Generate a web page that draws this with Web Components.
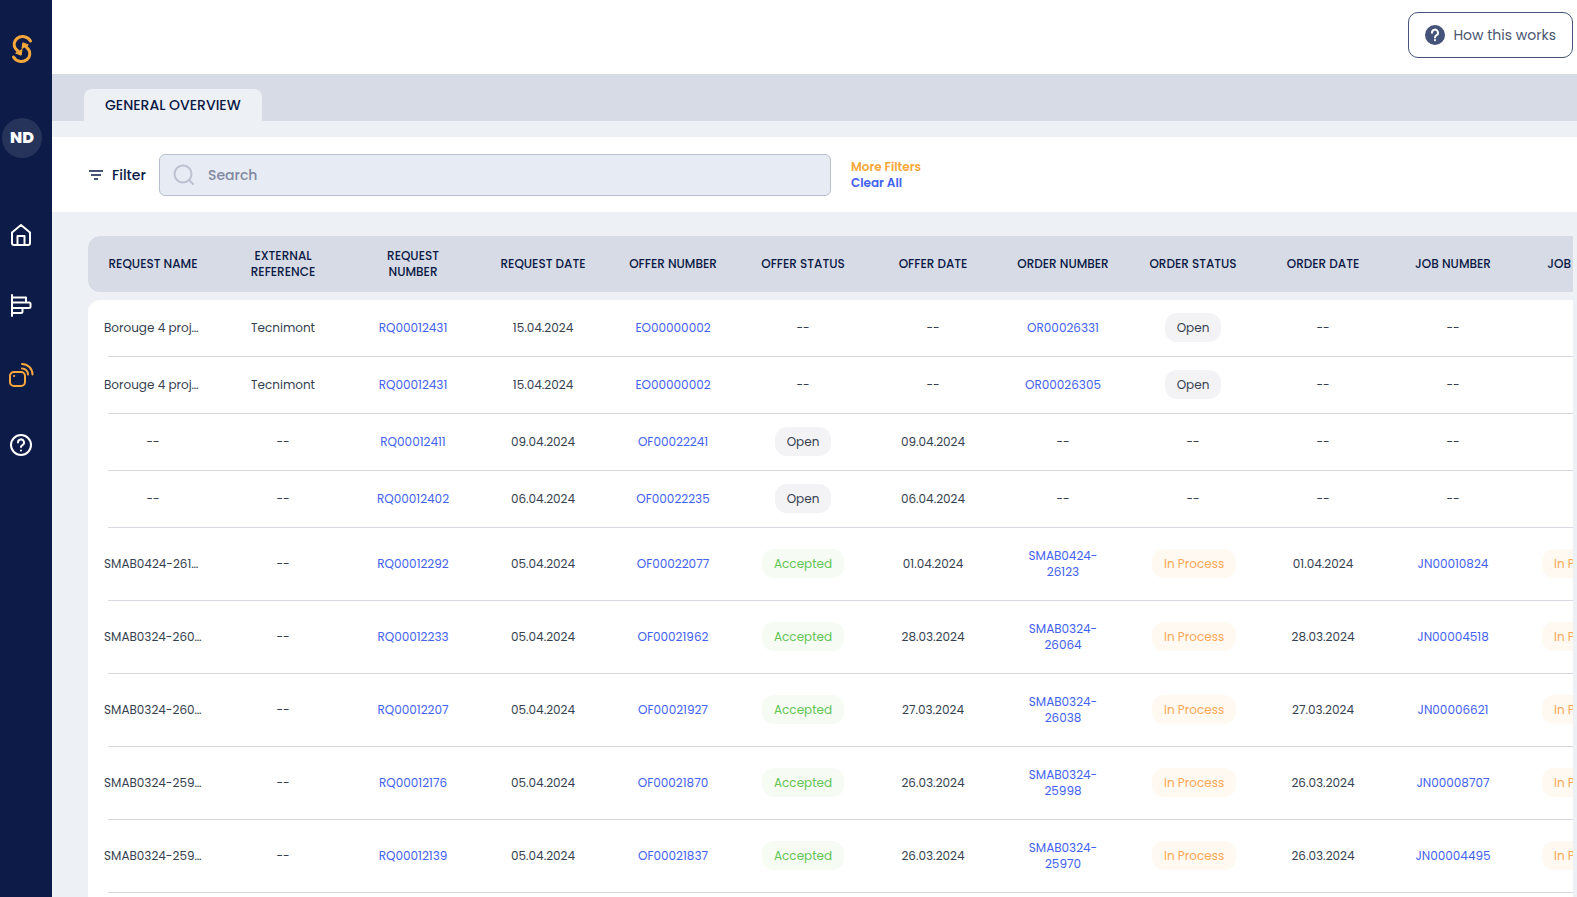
<!DOCTYPE html>
<html lang="en">
<head>
<meta charset="utf-8">
<title>General Overview</title>
<style>
  body {
    margin: 0;
    font-family: Poppins, Inter, sans-serif;
    color: #0b1a45;
    --navy: #0c1b47;
    --slate: #45527a;
    --band: #d7dbe5;
    --canvas: #edf0f5;
    --orange: #f8a83a;
    --link: #4462f0;
  }
</style>
</head>
<body>
<app-shell>
  <side-bar slot="side" initials="ND"></side-bar>
  <top-bar slot="main">How this works</top-bar>
  <tab-bar slot="main">GENERAL OVERVIEW</tab-bar>
  <filter-bar slot="main"></filter-bar>
  <orders-table slot="main"></orders-table>
</app-shell>

<script>
class BaseElement extends HTMLElement {
  connectedCallback() {
    if (this.shadowRoot) return;
    this.attachShadow({ mode: 'open' }).innerHTML = this.render();
  }
}

customElements.define('app-shell', class extends BaseElement {
  render() {
    return `<style>
      :host { display: flex; height: 100vh; overflow: hidden; background: var(--canvas); }
      main { flex: 1; min-width: 0; display: flex; flex-direction: column; }
      ::slotted(*) { flex-shrink: 0; }
    </style>
    <slot name="side"></slot><main><slot name="main"></slot></main>`;
  }
});

customElements.define('side-bar', class extends BaseElement {
  render() {
    return `<style>
      :host { box-sizing: border-box; width: 52px; background: var(--navy); padding: 34px 8px 0 0;
        display: flex; flex-direction: column; align-items: center; }
      svg { display: block; fill: none; stroke: #fff; stroke-width: 2; stroke-linejoin: round; stroke-linecap: round; }
      .logo svg { stroke: var(--orange); stroke-width: 3; }
      button { margin-top: 54px; width: 40px; height: 40px; border: 0; padding: 0; border-radius: 50%;
        background: #26345b; color: #fff; font: 800 16px/40px Poppins, Inter, sans-serif; }
      nav { margin-top: 65px; display: flex; flex-direction: column; align-items: center; gap: 46px; }
      a.active svg { stroke: var(--orange); }
    </style>
    <a class="logo" href="#" aria-label="Start"><svg width="22" height="30" viewBox="0 0 22 30">
      <path d="M19.500 7C17 2.500 10.500 1 6 4.500C2.500 7.500 2.500 12 4.500 14.500L9 19.500"/><path d="M2.500 23C5 27.500 11.500 29 16 25.500C19.500 22.500 19.500 18 17.500 15.500L13 10.500"/>
      <path d="M10.200 20.800L11 15.500L5 19Z M11.800 9.200L11 14.500L17 11Z" fill="#f8a83a" stroke-width="1"/></svg></a>
    <button type="button">${this.getAttribute('initials')}</button>
    <nav>
      <a href="#" aria-label="Home"><svg width="26" height="24" viewBox="0 0 26 24"><path d="M3 9.500L12 2L21 9.500V20a2 2 0 0 1-2 2H5a2 2 0 0 1-2-2z M8.500 22V13h7v9"/></svg></a>
      <a href="#" aria-label="Planning"><svg width="26" height="24" viewBox="0 0 26 24"><path d="M3 2v21M3 4.500H17V9.500 M3 9.500H20a1.500 1.500 0 0 1 1.500 1.500V13.500a1.500 1.500 0 0 1-1.500 1.500H3 M13.500 15V18.500a1.500 1.500 0 0 1-1.500 1.500H3"/></svg></a>
      <a class="active" href="#" aria-label="Devices"><svg width="26" height="24" viewBox="0 0 26 24"><rect x="1" y="9" width="15" height="14" rx="4"/><path d="M5 13h.2 M13 5.500a6 6 0 0 1 6 6 M13 1a10.500 10.500 0 0 1 10.500 10.500"/></svg></a>
      <a href="#" aria-label="Help"><svg width="26" height="24" viewBox="0 0 26 24"><circle cx="12" cy="12" r="10"/><path d="M9 9.500a3 3 0 1 1 4.500 2.500Q12 13 12 14 M12 17.500v.1"/></svg></a>
    </nav>`;
  }
});

customElements.define('top-bar', class extends BaseElement {
  render() {
    return `<style>
      :host { display: flex; justify-content: flex-end; background: #fff; padding: 12px 4px 16px; }
      button { display: flex; align-items: center; gap: 8px; height: 46px; padding: 0 16px;
        border: 1px solid var(--slate); border-radius: 10px; background: #fff; color: #4b5670;
        font: 400 14px/20px Poppins, Inter, sans-serif; }
    </style>
    <button type="button"><svg width="20" height="20" viewBox="0 0 20 20"><circle cx="10" cy="10" r="10" fill="#45527a"/><path d="M7 7.800a3 3 0 1 1 4.600 2.400Q10 11.200 10 12.500 M10 15v.3" fill="none" stroke="#fff" stroke-width="2" stroke-linecap="round"/></svg><slot></slot></button>`;
  }
});

customElements.define('tab-bar', class extends BaseElement {
  render() {
    return `<style>
      :host { display: flex; background: var(--band); padding: 15px 32px 0; margin-bottom: 16px; }
      button { height: 32px; border: 0; border-radius: 8px 8px 0 0; padding: 0 21px; background: var(--canvas);
        color: inherit; font: 500 14px/32px Poppins, Inter, sans-serif; }
    </style>
    <button type="button"><slot></slot></button>`;
  }
});

customElements.define('filter-bar', class extends BaseElement {
  render() {
    return `<style>
      :host { display: flex; align-items: center; height: 75px; padding: 0 36px; background: #fff; box-sizing: border-box; }
      label { display: flex; align-items: center; gap: 8px; width: 71px; font-size: 14px; font-weight: 500; line-height: 20px; }
      .box { box-sizing: border-box; display: flex; align-items: center; gap: 13px; flex: 0 1 672px;
        height: 42px; padding: 0 13px; border: 1px solid #b8bfcf; border-radius: 6px; background: #e7ebf3; }
      input { flex: 1; min-width: 0; border: 0; outline: 0; padding: 0; background: none; color: inherit;
        font: 500 14px/20px Poppins, Inter, sans-serif; }
      input::placeholder { color: #8088a0; opacity: 1; }
      .links { display: flex; flex-direction: column; margin-left: 20px; font-size: 12px; font-weight: 600; line-height: 16px; }
      a { color: var(--link); text-decoration: none; }
      a.more { color: var(--orange); }
    </style>
    <label for="q"><svg width="16" height="10" viewBox="0 0 16 10" stroke="#45527a" stroke-width="2"><path d="M1 1h14M3 5h10M6 9h4"/></svg>Filter</label>
    <div class="box"><svg width="22" height="22" viewBox="0 0 22 22" fill="none" stroke="#bcc1d1" stroke-width="2" stroke-linecap="round"><circle cx="10" cy="10" r="8.500"/><path d="M16 16l4 4"/></svg><input id="q" type="text" placeholder="Search"></div>
    <div class="links"><a class="more" href="#">More Filters</a><a href="#">Clear All</a></div>`;
  }
});

customElements.define('status-badge', class extends BaseElement {
  render() {
    return `<style>
      :host { display: inline-block; vertical-align: middle; padding: 0 12px; border-radius: 12px; font-size: 12px; line-height: 29px;
        white-space: nowrap; background: #f3f3f5; }
      :host([kind="accepted"]) { background: #f6fbf4; color: #62c554; }
      :host([kind="process"]) { background: #fff9f2; color: #f9a856; }
    </style><slot></slot>`;
  }
});

const COLUMNS = ['REQUEST NAME', 'EXTERNAL REFERENCE', 'REQUEST NUMBER', 'REQUEST DATE', 'OFFER NUMBER', 'OFFER STATUS',
  'OFFER DATE', 'ORDER NUMBER', 'ORDER STATUS', 'ORDER DATE', 'JOB NUMBER', 'JOB STATUS'];
const ROWS = [
  ['Borouge 4 proj…', 'Tecnimont', 'RQ00012431', '15.04.2024', 'EO00000002', '--', '--', 'OR00026331', 'Open', '--', '--', ''],
  ['Borouge 4 proj…', 'Tecnimont', 'RQ00012431', '15.04.2024', 'EO00000002', '--', '--', 'OR00026305', 'Open', '--', '--', ''],
  ['--', '--', 'RQ00012411', '09.04.2024', 'OF00022241', 'Open', '09.04.2024', '--', '--', '--', '--', ''],
  ['--', '--', 'RQ00012402', '06.04.2024', 'OF00022235', 'Open', '06.04.2024', '--', '--', '--', '--', ''],
  ['SMAB0424-261…', '--', 'RQ00012292', '05.04.2024', 'OF00022077', 'Accepted', '01.04.2024', 'SMAB0424-26123', 'In Process', '01.04.2024', 'JN00010824', 'In Process'],
  ['SMAB0324-260…', '--', 'RQ00012233', '05.04.2024', 'OF00021962', 'Accepted', '28.03.2024', 'SMAB0324-26064', 'In Process', '28.03.2024', 'JN00004518', 'In Process'],
  ['SMAB0324-260…', '--', 'RQ00012207', '05.04.2024', 'OF00021927', 'Accepted', '27.03.2024', 'SMAB0324-26038', 'In Process', '27.03.2024', 'JN00006621', 'In Process'],
  ['SMAB0324-259…', '--', 'RQ00012176', '05.04.2024', 'OF00021870', 'Accepted', '26.03.2024', 'SMAB0324-25998', 'In Process', '26.03.2024', 'JN00008707', 'In Process'],
  ['SMAB0324-259…', '--', 'RQ00012139', '05.04.2024', 'OF00021837', 'Accepted', '26.03.2024', 'SMAB0324-25970', 'In Process', '26.03.2024', 'JN00004495', 'In Process'],
  ['', '', '', '', '', '', '', '', '', '', '', '']
];
const KINDS = { 'Open': 'open', 'Accepted': 'accepted', 'In Process': 'process' };

customElements.define('orders-table', class extends BaseElement {
  cell(text, col) {
    if (KINDS[text]) return `<td><status-badge kind="${KINDS[text]}">${text}</status-badge></td>`;
    if (text && text !== '--' && [2, 4, 7, 10].includes(col)) return `<td><a href="#">${text.replace('-', '-<wbr>')}</a></td>`;
    if (text && text !== '--' && col === 0) return `<td class="name">${text}</td>`;
    return `<td>${text}</td>`;
  }
  render() {
    return `<style>
      :host { display: block; margin: 24px 4px 0 36px; overflow: hidden; border-radius: 12px 0 0 0; }
      table { table-layout: fixed; width: 1560px; border-spacing: 0; font-size: 12px; line-height: 16px; text-align: center; }
      th { box-sizing: border-box; height: 56px; padding: 0 16px; background: var(--band); font-weight: 500; }
      th:first-child { border-radius: 12px 0 0 12px; }
      tbody::before { content: ""; display: block; height: 8px; }
      td { box-sizing: border-box; height: 57px; padding: 0 24px 2px; font-weight: 400; color: #363f50;
        background: linear-gradient(#d7dae5, #d7dae5) 0 100% / 100% 1px no-repeat #fff; }
      tr.tall td { height: 73px; }
      td:first-child { padding: 0 16px 2px; background-position: 20px 100%; }
      tbody tr:first-child td:first-child { border-radius: 12px 0 0 0; }
      .name { text-align: left; white-space: nowrap; }
      a { color: var(--link); text-decoration: none; }
    </style>
    <table>
      <thead><tr>${COLUMNS.map(c => `<th scope="col">${c}</th>`).join('')}</tr></thead>
      <tbody>${ROWS.map((r, i) => `<tr class="${i > 3 ? 'tall' : ''}">${r.map((t, c) => this.cell(t, c)).join('')}</tr>`).join('')}</tbody>
    </table>`;
  }
});
</script>
</body>
</html>
